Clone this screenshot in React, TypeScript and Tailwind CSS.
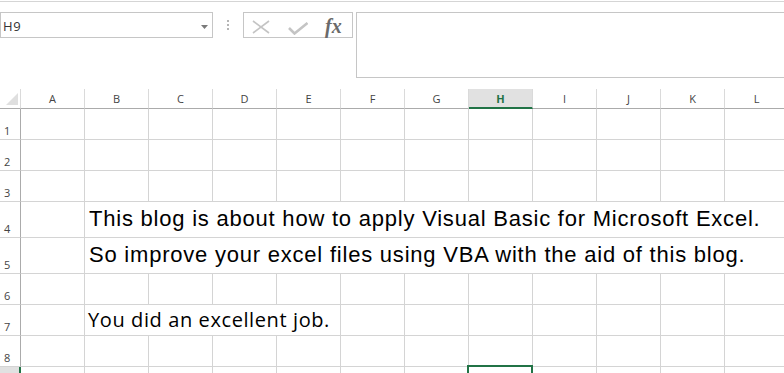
import React from 'react';

const COLS = ['A', 'B', 'C', 'D', 'E', 'F', 'G', 'H', 'I', 'J', 'K', 'L'];

function Cell() {
  return <div className="border-r border-b border-[#d4d4d4]" />;
}

function Empties({ count }: { count: number }) {
  return (
    <>
      {Array.from({ length: count }).map((_, i) => (
        <Cell key={i} />
      ))}
    </>
  );
}

function RowHead({ n }: { n: number }) {
  return (
    <div className="flex items-end border-b border-r border-b-[#d4d4d4] border-r-[#ababab] pb-[3px] pl-[4px] font-['Open_Sans',sans-serif] text-[11px] leading-[11px] text-[#444]">
      {n}
    </div>
  );
}

function ColHead({ label }: { label: string }) {
  if (label === 'H') {
    return (
      <div className="flex items-center justify-center border-b-2 border-r border-b-[#217346] border-r-[#dadada] bg-[#e1e1e1] pt-[1px] font-['Open_Sans',sans-serif] text-[11px] font-bold leading-none text-[#217346]">
        {label}
      </div>
    );
  }
  return (
    <div className="flex items-center justify-center border-b border-r border-b-[#ababab] border-r-[#dadada] font-['Open_Sans',sans-serif] text-[11px] leading-none text-[#444]">
      {label}
    </div>
  );
}

function TopBar() {
  return (
    <div className="h-[88px]">
      <div className="mt-px h-px bg-[#d5d5d5]" />
      <div className="mt-[10px] flex items-start">
        <div className="flex h-[26px] w-[213px] items-center justify-between border border-[#c6c6c6] pl-[2px] pr-[4px] pt-[2px]">
          <span className="font-['Open_Sans',sans-serif] text-[13px] leading-none tracking-[0.6px] text-[#333]">H9</span>
          <svg width="7" height="4" viewBox="0 0 7 4" className="mt-[1px]">
            <polygon points="0,0 7,0 3.5,4" fill="#7a7a7a" />
          </svg>
        </div>
        <div className="ml-[14px] mt-[8px] flex flex-col gap-[2px]">
          <div className="h-[2px] w-[2px] bg-[#b5b5b5]" />
          <div className="h-[2px] w-[2px] bg-[#b5b5b5]" />
          <div className="h-[2px] w-[2px] bg-[#b5b5b5]" />
        </div>
        <div className="ml-[14px] flex h-[26px] w-[110px] items-start border border-[#c6c6c6]">
          <svg width="18" height="14" viewBox="0 0 18 14" className="ml-[8px] mt-[7px]">
            <line x1="1" y1="1" x2="17" y2="13" stroke="#c4c4c4" strokeWidth="1.6" />
            <line x1="17" y1="1" x2="1" y2="13" stroke="#c4c4c4" strokeWidth="1.6" />
          </svg>
          <svg width="20" height="13" viewBox="0 0 20 13" className="ml-[18px] mt-[9px]">
            <polyline points="1,6 6.5,11.5 19.5,1" fill="none" stroke="#c4c4c4" strokeWidth="2.6" />
          </svg>
          <span className="ml-[17px] mt-[1px] font-['Liberation_Serif',serif] text-[20px] font-bold italic leading-[24px] text-[#6a6a6a]">
            fx
          </span>
        </div>
        <div className="ml-[3px] h-[66px] flex-1 border border-r-0 border-[#c6c6c6]" />
      </div>
    </div>
  );
}

const bigText = "col-span-11 flex items-end whitespace-nowrap border-b border-r border-[#d4d4d4] pb-[7px] pl-[4px] font-['Liberation_Sans',Arial,sans-serif] text-[22px] leading-[22px] tracking-[0.78px] text-black";

function Sheet() {
  return (
    <div className="h-[285px] w-[784px] overflow-hidden">
      <div className="grid w-[789px] grid-cols-[21px_repeat(12,64px)] grid-rows-[20px_31px_31px_31px_36px_36px_31px_31px_31px_31px]">
        {/* header */}
        <div className="flex items-end justify-end border-b border-r border-b-[#ababab] border-r-[#dadada] pb-[3px] pr-[2px]">
          <svg width="12" height="12" viewBox="0 0 12 12">
            <polygon points="12,0 12,12 0,12" fill="#dfdfdf" />
          </svg>
        </div>
        {COLS.map((c) => (
          <ColHead key={c} label={c} />
        ))}

        {/* rows 1-3 */}
        <RowHead n={1} />
        <Empties count={12} />
        <RowHead n={2} />
        <Empties count={12} />
        <RowHead n={3} />
        <Empties count={12} />

        {/* row 4 */}
        <RowHead n={4} />
        <Cell />
        <div className={bigText}>This blog is about how to apply Visual Basic for Microsoft Excel.</div>

        {/* row 5 */}
        <RowHead n={5} />
        <Cell />
        <div className={bigText}>So improve your excel files using VBA with the aid of this blog.</div>

        {/* row 6 */}
        <RowHead n={6} />
        <Empties count={12} />

        {/* row 7 */}
        <RowHead n={7} />
        <Cell />
        <div className="col-span-4 flex items-end whitespace-nowrap border-b border-r border-[#d4d4d4] pb-[5px] pl-[3px] font-['Open_Sans',sans-serif] text-[20px] leading-[20px] tracking-[0.6px] text-black">
          You did an excellent job.
        </div>
        <Empties count={7} />

        {/* row 8 */}
        <RowHead n={8} />
        <Empties count={12} />

        {/* row 9 (selected row, number below the visible area) */}
        <div className="border-b border-r-2 border-b-[#d4d4d4] border-r-[#217346] bg-[#e1e1e1]" />
        <Empties count={7} />
        <div className="relative border-b border-r border-[#d4d4d4]">
          <div className="absolute -left-[2px] -right-[1px] -top-[2px] h-[40px] border-2 border-[#217346]" />
        </div>
        <Empties count={4} />
      </div>
    </div>
  );
}

export default function App() {
  return (
    <div className="h-[373px] w-[784px] overflow-hidden bg-white">
      <TopBar />
      <Sheet />
    </div>
  );
}
